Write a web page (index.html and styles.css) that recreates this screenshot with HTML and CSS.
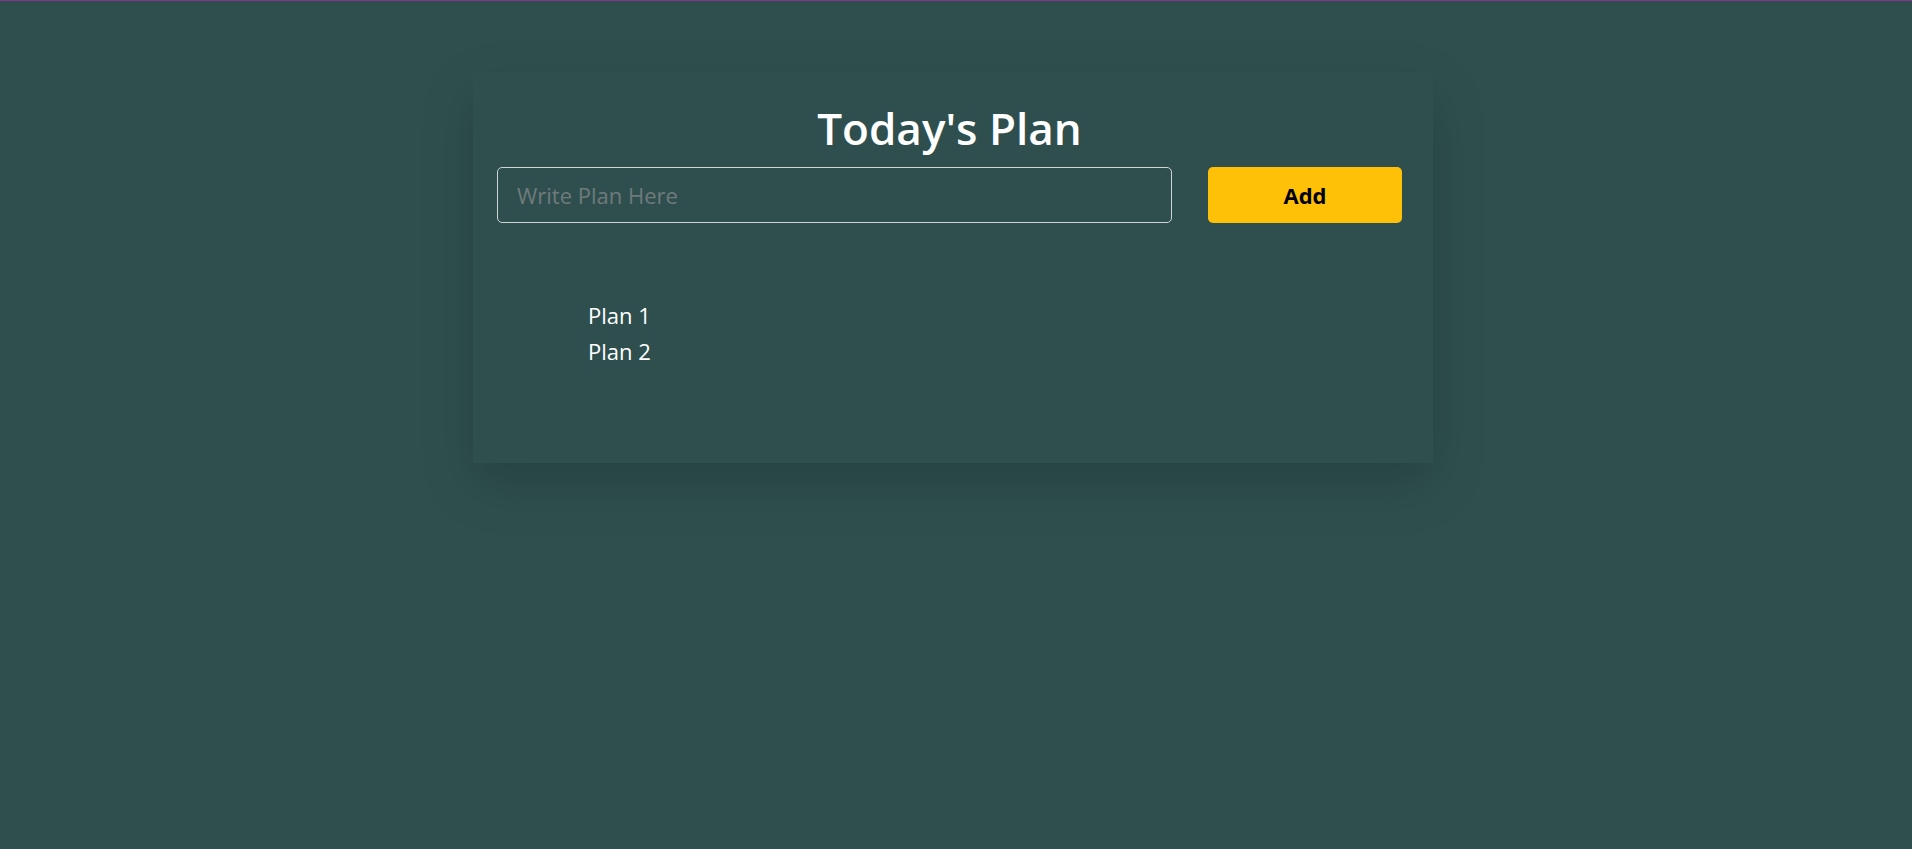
FILE: index.html
```html
<!DOCTYPE html>
<html lang="en">
<head>
<meta charset="utf-8">
<title>Today's Plan</title>
<link rel="stylesheet" href="styles.css">
</head>
<body>
<div class="page">
  <div class="card">
    <h1 class="title">Today's Plan</h1>
    <div class="form-row">
      <input class="plan-input" type="text" placeholder="Write Plan Here">
      <button class="add-btn" type="button">Add</button>
    </div>
    <ul class="plan-list">
      <li class="plan-item">Plan 1</li>
      <li class="plan-item">Plan 2</li>
    </ul>
  </div>
</div>
</body>
</html>
```

FILE: styles.css
```css
html, body {
  margin: 0;
  padding: 0;
  height: 100%;
  background: #2f4f4f;
}

body {
  border-top: 1px solid #86368f;
  box-sizing: border-box;
  font-family: "Open Sans", "Noto Sans", sans-serif;
  color: #ffffff;
}

.page {
  padding-top: 72px;
}

.card {
  box-sizing: border-box;
  width: 960px;
  margin-left: calc(50% - 483px);
  background: #2f4f4f;
  box-shadow: 0 20px 50px rgba(0, 0, 0, 0.17);
  padding: 27px 31px 94px 24px;
}

.title {
  margin: 0;
  font-size: 44px;
  line-height: 57px;
  font-weight: 600;
  text-align: center;
  color: #ffffff;
}

.form-row {
  display: flex;
  gap: 36px;
  margin-top: 10px;
}

.plan-input {
  flex: 1;
  box-sizing: border-box;
  height: 56px;
  padding: 0 19px;
  background: transparent;
  border: 1px solid #cfd4d4;
  border-radius: 5px;
  font-family: inherit;
  font-size: 22px;
  color: #ffffff;
  outline: none;
}

.plan-input::placeholder {
  color: #6f7a7b;
}

.add-btn {
  box-sizing: border-box;
  width: 194px;
  height: 56px;
  border: none;
  border-radius: 5px;
  background: #ffc107;
  color: #000000;
  font-family: inherit;
  font-size: 22px;
  font-weight: 700;
  cursor: pointer;
}

.plan-list {
  list-style: none;
  margin: 74px 0 0 0;
  padding: 0 0 0 91px;
}

.plan-item {
  font-size: 22px;
  line-height: 36px;
}
```
